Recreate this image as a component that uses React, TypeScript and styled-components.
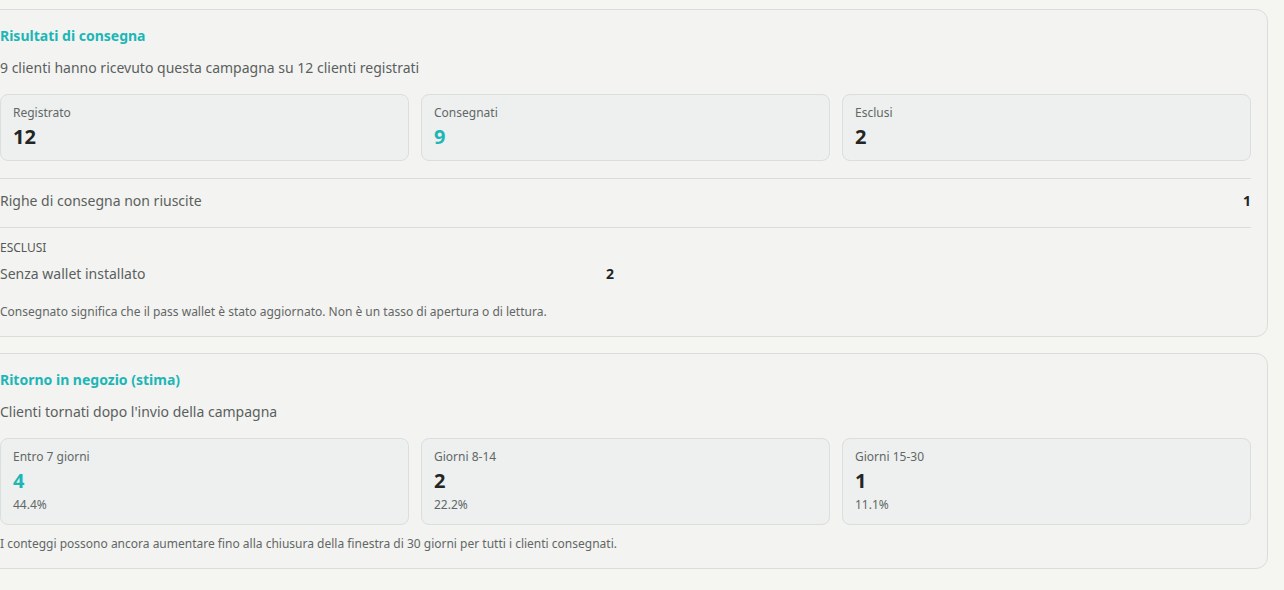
import React from 'react';
import styled, { createGlobalStyle } from 'styled-components';

const GlobalStyle = createGlobalStyle`
	html, body {
		margin: 0;
		padding: 0;
		background: #f5f5f1;
		overflow: hidden;
	}
	body {
		font-family: 'Noto Sans', 'Open Sans', Arial, sans-serif;
		color: #5a5f5e;
	}
`;

const Page = styled.div`
	display: flex;
	flex-direction: column;
	gap: 16px;
	width: 1285px;
	margin-left: -17px;
	padding-top: 9px;
`;

const Panel = styled.section`
	background: #f3f3f1;
	border: 1px solid #dcdddb;
	border-radius: 12px;
	padding: 16px;
`;

const Title = styled.h2`
	margin: 0;
	font-size: 14px;
	line-height: 20px;
	font-weight: 700;
	color: #1db6b6;
`;

const Subtitle = styled.p`
	margin: 12px 0 0;
	font-size: 14px;
	line-height: 20px;
	color: #5a5f5e;
`;

const StatGrid = styled.div`
	display: grid;
	grid-template-columns: repeat(3, 1fr);
	gap: 12px;
	margin-top: 16px;
`;

const StatCard = styled.div`
	background: #edf0ef;
	border: 1px solid #dadedc;
	border-radius: 8px;
	padding: 10px 12px 11px;
`;

const StatLabel = styled.div`
	font-size: 12px;
	line-height: 16px;
	color: #626766;
`;

const StatValue = styled.div<{ $accent?: boolean }>`
	margin-top: 4px;
	font-size: 20px;
	line-height: 24px;
	font-weight: 700;
	color: ${(p) => (p.$accent ? '#1db6b6' : '#222524')};
`;

const StatPct = styled.div`
	margin-top: 4px;
	font-size: 12px;
	line-height: 16px;
	color: #626766;
`;

const Divider = styled.hr<{ $gap: number }>`
	border: 0;
	border-top: 1px solid #dcdddb;
	margin: ${(p) => p.$gap}px 0 0;
`;

const Row = styled.div<{ $narrow?: boolean }>`
	display: flex;
	justify-content: space-between;
	align-items: center;
	font-size: 14px;
	line-height: 20px;
	color: #5a5f5e;
	max-width: ${(p) => (p.$narrow ? '614px' : 'none')};
`;

const FailedRow = styled(Row)`
	padding: 12px 0 16px;
`;

const Count = styled.span`
	font-size: 14px;
	font-weight: 700;
	color: #222524;
`;

const GroupLabel = styled.div`
	margin-top: 12px;
	font-size: 12px;
	line-height: 16px;
	text-transform: uppercase;
	color: #555a59;
`;

const GroupRow = styled(Row)`
	margin-top: 8px;
`;

const Note = styled.p<{ $gap: number }>`
	margin: ${(p) => p.$gap}px 0 0;
	font-size: 12px;
	line-height: 16px;
	color: #626766;
`;

const delivery = [
	{ label: 'Registrato', value: 12 },
	{ label: 'Consegnati', value: 9, accent: true },
	{ label: 'Esclusi', value: 2 },
];

const returns = [
	{ label: 'Entro 7 giorni', value: 4, pct: '44.4%', accent: true },
	{ label: 'Giorni 8-14', value: 2, pct: '22.2%' },
	{ label: 'Giorni 15-30', value: 1, pct: '11.1%' },
];

export default function App() {
	return (
		<>
			<GlobalStyle />
			<Page>
				<Panel>
					<Title>Risultati di consegna</Title>
					<Subtitle>9 clienti hanno ricevuto questa campagna su 12 clienti registrati</Subtitle>
					<StatGrid>
						{delivery.map((s) => (
							<StatCard key={s.label}>
								<StatLabel>{s.label}</StatLabel>
								<StatValue $accent={s.accent}>{s.value}</StatValue>
							</StatCard>
						))}
					</StatGrid>
					<Divider $gap={17} />
					<FailedRow>
						<span>Righe di consegna non riuscite</span>
						<Count>1</Count>
					</FailedRow>
					<Divider $gap={0} />
					<GroupLabel>Esclusi</GroupLabel>
					<GroupRow $narrow>
						<span>Senza wallet installato</span>
						<Count>2</Count>
					</GroupRow>
					<Note $gap={20}>
						Consegnato significa che il pass wallet è stato aggiornato. Non è un tasso di apertura o di lettura.
					</Note>
				</Panel>

				<Panel>
					<Title>Ritorno in negozio (stima)</Title>
					<Subtitle>Clienti tornati dopo l'invio della campagna</Subtitle>
					<StatGrid>
						{returns.map((s) => (
							<StatCard key={s.label}>
								<StatLabel>{s.label}</StatLabel>
								<StatValue $accent={s.accent}>{s.value}</StatValue>
								<StatPct>{s.pct}</StatPct>
							</StatCard>
						))}
					</StatGrid>
					<Note $gap={11}>
						I conteggi possono ancora aumentare fino alla chiusura della finestra di 30 giorni per tutti i clienti consegnati.
					</Note>
				</Panel>
			</Page>
		</>
	);
}
